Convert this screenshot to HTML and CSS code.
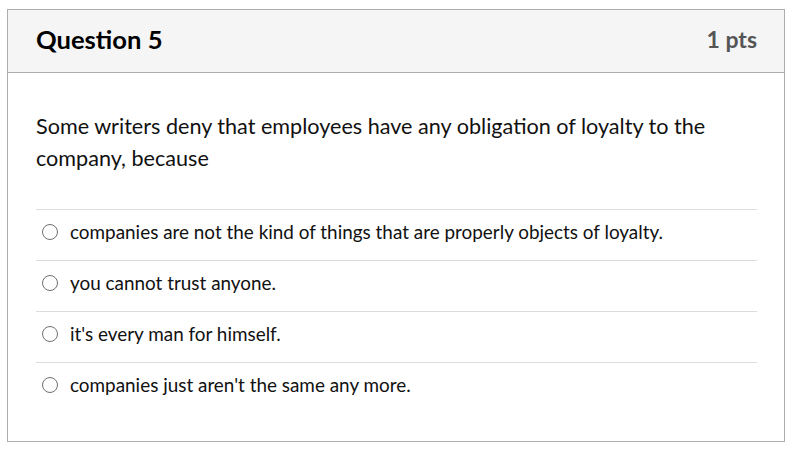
FILE: index.html
```html
<!DOCTYPE html>
<html>
<head>
<meta charset="utf-8">
<link rel="stylesheet" href="styles.css">
</head>
<body>
<div class="question">
  <div class="header">
    <span class="title">Question 5</span>
    <span class="pts">1 pts</span>
  </div>
  <div class="content">
    <p class="text">Some writers deny that employees have any obligation of loyalty to the company, because</p>
    <div class="answers">
      <label class="answer"><span class="radio"></span><span>companies are not the kind of things that are properly objects of loyalty.</span></label>
      <label class="answer"><span class="radio"></span><span>you cannot trust anyone.</span></label>
      <label class="answer"><span class="radio"></span><span>it's every man for himself.</span></label>
      <label class="answer"><span class="radio"></span><span>companies just aren't the same any more.</span></label>
    </div>
  </div>
</div>
</body>
</html>
```

FILE: styles.css
```css
html, body {
  margin: 0;
  padding: 0;
  background: #fff;
}
body {
  font-family: Lato, "Liberation Sans", sans-serif;
  color: #111;
}
.question {
  margin: 9px 0 0 7px;
  width: 778px;
  height: 433px;
  box-sizing: border-box;
  border: 1px solid #adadad;
}
.header {
  height: 63px;
  box-sizing: border-box;
  background: #f5f5f5;
  border-bottom: 1px solid #adadad;
  display: flex;
  align-items: center;
  justify-content: space-between;
  padding: 0 27px 4px 28px;
}
.title {
  font-size: 25.6px;
  font-weight: bold;
  color: #000;
}
.pts {
  font-size: 23px;
  font-weight: bold;
  color: #555;
}
.content {
  padding: 37px 27px 0 28px;
}
.text {
  margin: 0;
  font-size: 21.6px;
  line-height: 32px;
  color: #111;
  padding-right: 20px;
}
.answers {
  margin-top: 35px;
}
.answer {
  display: flex;
  align-items: center;
  height: 51px;
  box-sizing: border-box;
  border-top: 1px solid #dcdcdc;
  font-size: 18.9px;
  color: #111;
  padding-left: 6px;
  padding-bottom: 8px;
}
.radio {
  width: 16px;
  height: 16px;
  box-sizing: border-box;
  border: 1.5px solid #6f6f6f;
  border-radius: 50%;
  margin: 2px 12px 0 0;
  flex: none;
}
```
